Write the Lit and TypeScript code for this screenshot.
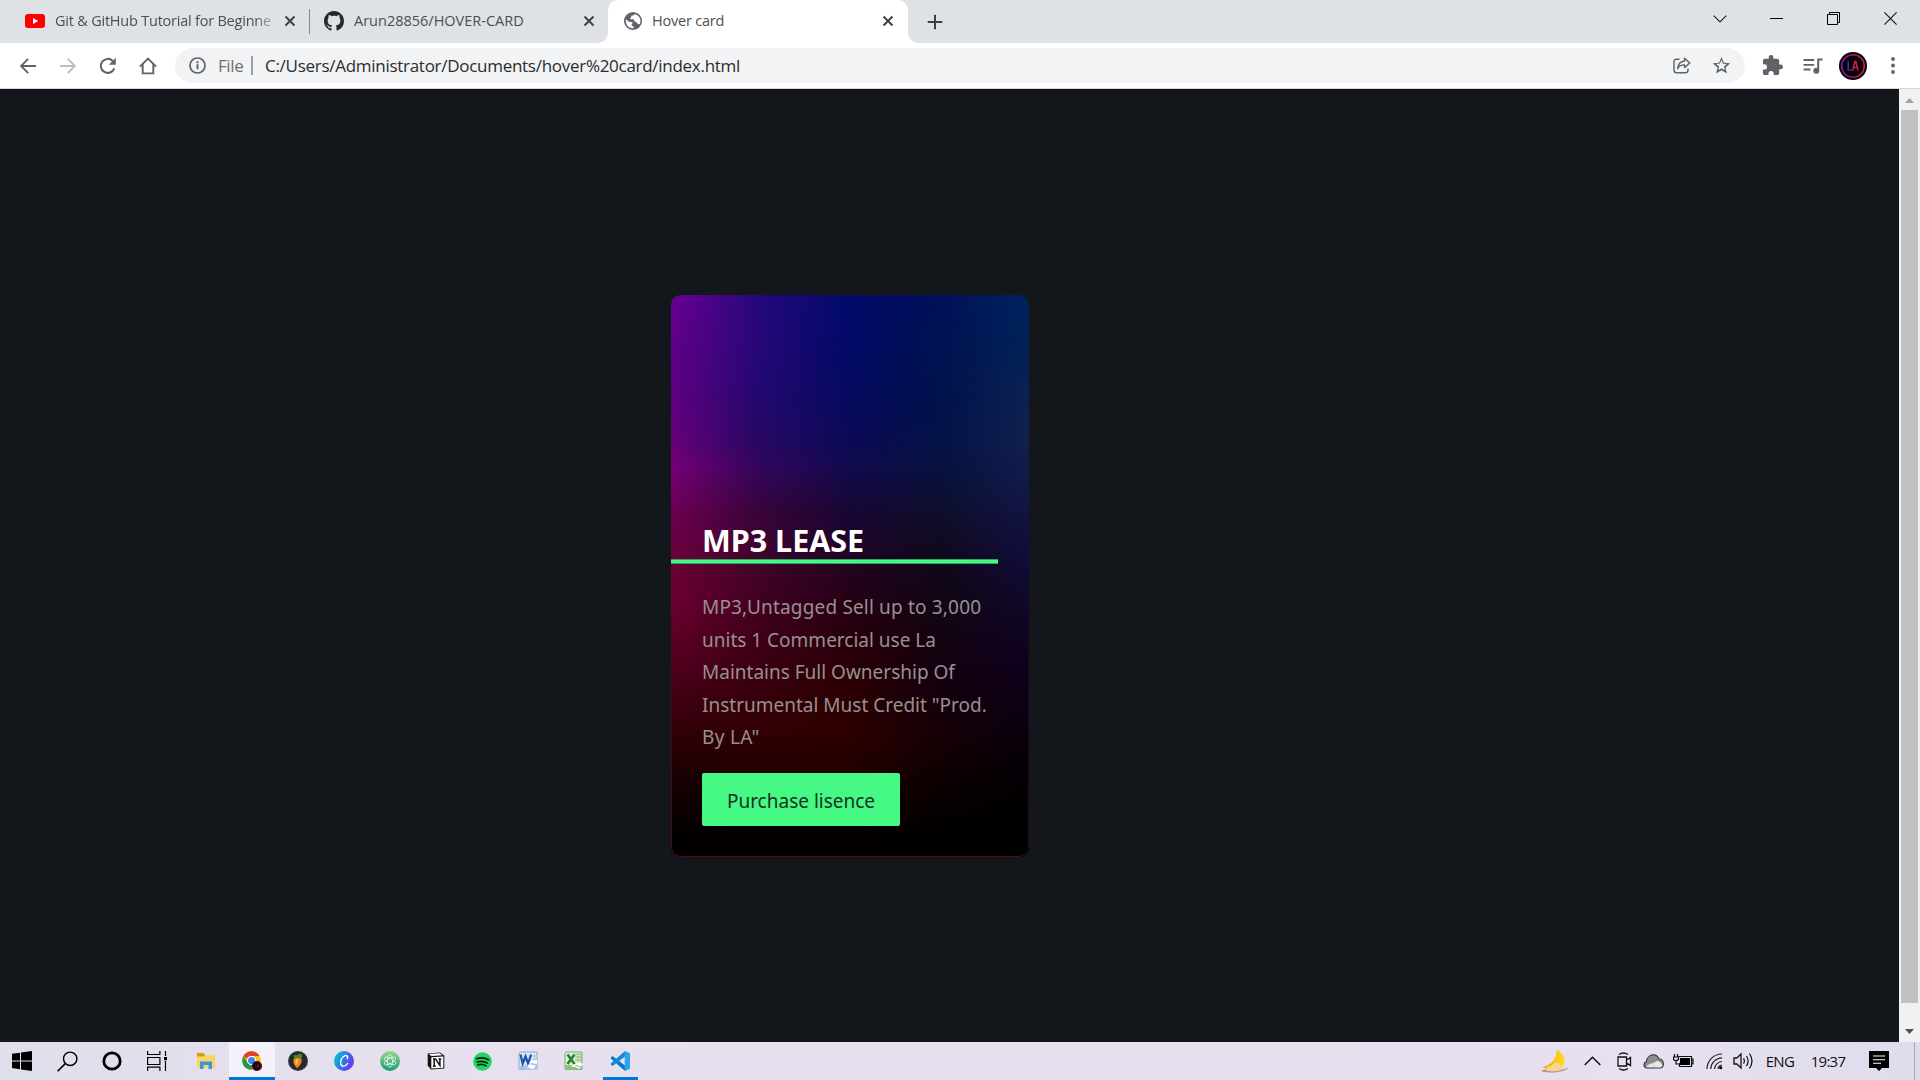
import { LitElement, html, svg, css } from "lit";
import { customElement } from "lit/decorators.js";

const ink = "#5f6368";
const icon = (w: number, h: number, vb: string, body: unknown) =>
  html`<svg width=${w} height=${h} viewBox=${vb} fill="none">${body}</svg>`;

const closeX = icon(12, 12, "0 0 12 12", svg`<path d="M1.5 1.5l9 9M10.5 1.5l-9 9" stroke="#3c4043" stroke-width="1.9"/>`);

const tabIcons = {
  youtube: icon(20, 14, "0 0 20 14", svg`<rect width="20" height="14" rx="3" fill="#f00"/><path d="M8 4l5.2 3L8 10z" fill="#fff"/>`),
  github: icon(20, 20, "0 0 16 16", svg`<path fill="#24292f" d="M8 0C3.58 0 0 3.58 0 8c0 3.54 2.29 6.53 5.47 7.59.4.07.55-.17.55-.38 0-.19-.01-.82-.01-1.49-2.01.37-2.53-.49-2.69-.94-.09-.23-.48-.94-.82-1.13-.28-.15-.68-.52-.01-.53.63-.01 1.08.58 1.23.82.72 1.21 1.87.87 2.33.66.07-.52.28-.87.51-1.07-1.78-.2-3.64-.89-3.64-3.95 0-.87.31-1.59.82-2.15-.08-.2-.36-1.02.08-2.12 0 0 .67-.21 2.2.82.64-.18 1.32-.27 2-.27s1.36.09 2 .27c1.53-1.04 2.2-.82 2.2-.82.44 1.1.16 1.92.08 2.12.51.56.82 1.27.82 2.15 0 3.07-1.87 3.75-3.65 3.95.29.25.54.73.54 1.48 0 1.07-.01 1.93-.01 2.2 0 .21.15.46.55.38A8 8 0 0016 8c0-4.42-3.58-8-8-8z"/>`),
  globe: icon(18, 18, "0 0 18 18", svg`<circle cx="9" cy="9" r="9" fill=${ink}/><path fill="#fff" d="M10.6 1.9c-.3 1-1.100 1.500-2.300 1.500-1 .1-1.100.7-1 1.500-.2.9-1.500.8-1.400 1.700.1.900 1.300.7 2.400.7 1.500 0 2 .5 2 1.800.2 1.200 1.700.7 2.500 1.500.7.500.5 1.500 1.600 1.700.8.100 1.400-.4 1.700-1.100a7.300 7.300 0 0 0-5.500-9.300zM2 7.200c-.8 3.500 1 7 3.700 8.300 1.400.7 2.900.9 3.900.7v-1.700c-1.200-.2-2-.8-2-2 .1-.8 1-.9 1-1.600-.1-.9-1-1-2.300-1C4.600 9.700 3.300 8.500 2 7.200z"/>`),
};

const logo = (size: number, cls: string) => html`<svg class=${cls} width=${size} height=${size} viewBox="0 0 28 28">
  <defs><linearGradient id="ring" x1="0" x2="1"><stop offset="0" stop-color="#7d1fa0"/><stop offset=".5" stop-color="#a01468"/><stop offset="1" stop-color="#e01b2c"/></linearGradient></defs>
  <circle cx="14" cy="14" r="14" fill="#050308"/>
  <circle cx="14" cy="14" r="11.300" fill="none" stroke="url(#ring)" stroke-width="1.500"/>
  <path d="M9.200 9v9h4.300" fill="none" stroke="#4527a8" stroke-width="1.600"/>
  <path d="M13.600 18.500L16.100 9.200h.7l2.300 9.300M14.500 15.600h4" fill="none" stroke="#d81b48" stroke-width="1.500"/>
</svg>`;

/* Artwork colours of the card, one row per height (in %), five evenly spaced stops. */
const mesh: [number, string[]][] = [
  [0, ["#690092", "#24087c", "#000b68", "#001058", "#00245c"]],
  [8, ["#60008a", "#260878", "#000a67", "#001252", "#00225a"]],
  [17, ["#5f0080", "#220870", "#050a60", "#00124c", "#0b2252"]],
  [26, ["#66007a", "#260864", "#0c0a57", "#041246", "#12204f"]],
  [31, ["#740074", "#32065a", "#120a4c", "#07123e", "#121c4c"]],
  [39, ["#6c0050", "#380438", "#180634", "#0f0e2a", "#121444"]],
  [48, ["#6c0036", "#40042a", "#220420", "#10081a", "#110b38"]],
  [56, ["#68002e", "#420020", "#260012", "#120612", "#100828"]],
  [67, ["#4e001c", "#3a0010", "#2a0006", "#140010", "#0e001c"]],
  [78, ["#300008", "#320004", "#2e0000", "#160006", "#0a000e"]],
  [87, ["#160003", "#1c0000", "#1c0000", "#0c0002", "#030004"]],
  [95, ["#050000", "#070000", "#070000", "#020000", "#000000"]],
  [100, ["#000000", "#000000", "#000000", "#000000", "#000000"]],
];

@customElement("browser-chrome")
class BrowserChrome extends LitElement {
  static styles = css`
    :host { display: block; font-family: "Segoe UI", "Open Sans", "Noto Sans", sans-serif; }
    svg { display: block; flex: none; }
    .strip { height: 43px; background: #dee1e6; display: flex; align-items: stretch; }
    .tab { display: flex; align-items: center; font-size: 14.500px; color: #4b4f53; height: 42px; white-space: nowrap; box-sizing: border-box; }
    .tab .label { flex: 1; margin-left: 10px; padding-bottom: 2px; }
    .t1 { width: 309px; padding: 0 13px 0 25px; }
    .t1 .label { letter-spacing: -0.220px; margin-right: 5px; -webkit-mask-image: linear-gradient(90deg, #000 200px, transparent 225px); mask-image: linear-gradient(90deg, #000 200px, transparent 225px); }
    .t2 { width: 299px; padding: 0 14px 0 14px; }
    .t2 .label { letter-spacing: 0; }
    .sep { width: 1px; height: 25px; margin-top: 9px; background: #878b90; }
    .active { width: 300px; height: 43px; background: #fff; border-radius: 10px 10px 0 0; padding: 0 14px 1px 16px; margin-left: -1px; margin-right: -1px; position: relative; }
    .active .label { letter-spacing: -0.220px; margin-left: 10px; }
    .active::before, .active::after { content: ""; position: absolute; bottom: 0; width: 10px; height: 10px; }
    .active::before { left: -10px; background: radial-gradient(circle at 0 0, transparent 9.500px, #fff 10px); }
    .active::after { right: -10px; background: radial-gradient(circle at 100% 0, transparent 9.500px, #fff 10px); }
    .plus { width: 56px; display: grid; place-items: center; }
    .controls { margin-left: auto; display: flex; margin-right: 1px; height: 37px; }
    .controls > span { width: 57px; display: grid; place-items: center; }
    .bar { height: 45px; background: #fff; border-bottom: 1px solid #d3d5d8; display: flex; align-items: center; padding: 0 7px 0 7.500px; }
    .btn { width: 40px; display: grid; place-items: center; }
    .omni { flex: none; width: 1570px; height: 35px; border-radius: 18px; background: #f1f3f4; margin: 0 7.500px 0 7.500px; display: flex; align-items: center; box-sizing: border-box; padding: 0 14px; font-size: 17px; color: #2b2c2f; white-space: nowrap; }
    .file { color: #6b6f74; margin-left: 12px; width: 33px; letter-spacing: -0.400px; }
    .rule { width: 2px; height: 19px; background: #9a9da1; margin-right: 12px; }
    .url { flex: 1; letter-spacing: -0.280px; }
    .share { margin-right: 21px; }
  `;
  render() {
    return html`
      <div class="strip">
        <div class="tab t1">${tabIcons.youtube}<span class="label">Git &amp; GitHub Tutorial for Beginne</span>${closeX}</div>
        <div class="sep"></div>
        <div class="tab t2">${tabIcons.github}<span class="label">Arun28856/HOVER-CARD</span>${closeX}</div>
        <div class="tab active">${tabIcons.globe}<span class="label">Hover card</span>${closeX}</div>
        <div class="plus">${icon(16, 16, "0 0 16 16", svg`<path d="M8 .7v14.600M.7 8h14.600" stroke="#3c4043" stroke-width="2"/>`)}</div>
        <div class="controls">
          <span>${icon(14, 8, "0 0 14 8", svg`<path d="M.7.7L7 7l6.300-6.300" stroke="#222" stroke-width="1.100"/>`)}</span>
          <span>${icon(13, 1, "0 0 13 1", svg`<path d="M0 .5h13" stroke="#000"/>`)}</span>
          <span>${icon(13, 13, "0 0 13 13", svg`<path d="M.5 2.500h10v10H.5zM2.500 2.500v-2h10v10h-2" stroke="#000"/>`)}</span>
          <span>${icon(13, 13, "0 0 13 13", svg`<path d="M.4.4l12.200 12.200M12.600.4L.4 12.600" stroke="#111" stroke-width="1.100"/>`)}</span>
        </div>
      </div>
      <div class="bar">
        <span class="btn">${icon(16, 16, "0 0 16 16", svg`<path d="M8.200.8L1 8l7.200 7.200M1 8h15" stroke=${ink} stroke-width="1.900"/>`)}</span>
        <span class="btn">${icon(16, 16, "0 0 16 16", svg`<path d="M7.800.8L15 8l-7.200 7.200M15 8H0" stroke="#babcbe" stroke-width="1.900"/>`)}</span>
        <span class="btn">${icon(18, 18, "0 0 18 18", svg`<path d="M15.300 11.400A7 7 0 1 1 13.800 4" stroke=${ink} stroke-width="2"/><path d="M16.800.8v7h-7z" fill=${ink}/>`)}</span>
        <span class="btn">${icon(18, 18, "0 0 18 18", svg`<path d="M.9 9.600L9 1.600l8.100 8M3.700 7.500v8.900h10.600V7.500" stroke=${ink} stroke-width="1.900"/>`)}</span>
        <div class="omni">
          ${icon(17, 17, "0 0 17 17", svg`<circle cx="8.500" cy="8.500" r="7.500" stroke=${ink} stroke-width="1.700"/><path d="M8.500 7.300v5M8.500 4.300v1.900" stroke=${ink} stroke-width="2"/>`)}
          <span class="file">File</span><span class="rule"></span>
          <span class="url">C:/Users/Administrator/Documents/hover%20card/index.html</span>
          <span class="share">${icon(18, 17, "0 0 18 17", svg`<path d="M6.500 2.200H3.500Q1 2.200 1 4.700v8.600Q1 15.800 3.500 15.800h9Q15 15.800 15 13.300V11.500" stroke=${ink} stroke-width="1.400"/><path d="M11.500 1.200L16.800 6l-5.300 4.600V7.900C8.200 7.700 6 9.100 4.600 11.600 5 7.300 7.300 4.500 11.500 4z" stroke=${ink} stroke-width="1.400" stroke-linejoin="round"/>`)}</span>
          ${icon(19, 19, "0 0 24 24", svg`<path d="M23 9.240l-7.900-.68L12 1.300 8.900 8.570 1 9.240l6 5.200-1.800 7.720 6.800-4.100 6.800 4.100-1.790-7.730L23 9.240zM12 15.400l-4.120 2.490 1.090-4.690-3.630-3.150 4.790-.42L12 5.200l1.880 4.440 4.790.41-3.630 3.150 1.090 4.690L12 15.400z" fill=${ink}/>`)}
        </div>
        <span class="btn">${icon(21, 21, "1 1 22 22", svg`<path d="M20.500 11H19V7c0-1.100-.9-2-2-2h-4V3.500a2.500 2.500 0 0 0-5 0V5H4c-1.100 0-2 .9-2 2v3.800h1.500a2.700 2.700 0 0 1 0 5.400H2V20c0 1.100.9 2 2 2h3.800v-1.500a2.700 2.700 0 0 1 5.400 0V22H17c1.100 0 2-.9 2-2v-4h1.500a2.500 2.500 0 0 0 0-5z" fill=${ink}/>`)}</span>
        <span class="btn">${icon(20, 16, "0 0 20 16", svg`<path d="M.5 2h10.700M.5 6.800h10.700M.5 11.500h7" stroke=${ink} stroke-width="1.800"/><path d="M15.200 12.500V1.600H19.500" stroke=${ink} stroke-width="2"/><circle cx="13.300" cy="12.700" r="3" fill=${ink}/>`)}</span>
        <span class="btn">${logo(28, "")}</span>
        <span class="btn">${icon(4, 17, "0 0 4 17", svg`<g fill=${ink}><circle cx="2" cy="2" r="1.900"/><circle cx="2" cy="8.500" r="1.900"/><circle cx="2" cy="15" r="1.900"/></g>`)}</span>
      </div>`;
  }
}

@customElement("hover-card")
class HoverCard extends LitElement {
  static styles = css`
    :host { display: block; width: 358px; height: 562px; font-family: "Segoe UI", "Noto Sans", sans-serif; }
    .card { display: grid; width: 358px; height: 562px; border-radius: 10px; overflow: hidden; }
    .row, .content, .rim { grid-area: 1 / 1; }
    .rim { border: 1px solid #520a1a; border-top: 0; border-right-color: #220a20; border-radius: 10px; -webkit-mask-image: linear-gradient(180deg, transparent 50%, #000 90%); mask-image: linear-gradient(180deg, transparent 50%, #000 90%); }
    .content { z-index: 1; display: flex; flex-direction: column; align-items: flex-start; }
    h1 { margin: 224px 0 0 31px; font-size: 30.500px; line-height: 42px; height: 40px; font-weight: 700; color: #fff; letter-spacing: 0; white-space: nowrap; }
    .line { width: 327px; height: 5px; background: #46f884; border: 1px solid #31a35f; border-left: 0; border-right: 0; box-sizing: border-box; }
    p { margin: 27px 0 0 31px; font-size: 19px; line-height: 32.600px; color: #989090; white-space: nowrap; letter-spacing: 0; }
    .wide { letter-spacing: 0.170px; }
    .wider { letter-spacing: 0.350px; }
    button { margin: 19px 0 0 31px; width: 198px; height: 53px; border: 0; border-radius: 2px; background: #46f884; color: #153322; font: 400 19px/53px "Segoe UI", "Noto Sans", sans-serif; padding: 2px 0 0; white-space: nowrap; }
  `;
  render() {
    return html`<div class="card">
      ${mesh.map(([y, stops], i) => {
        const mask = i ? `linear-gradient(180deg, transparent ${mesh[i - 1][0]}%, #000 ${y}%)` : "none";
        return html`<div class="row" style="background:linear-gradient(90deg, ${stops.join(",")});-webkit-mask-image:${mask};mask-image:${mask}"></div>`;
      })}
      <div class="rim"></div>
      <div class="content">
        <h1>MP3 LEASE</h1>
        <div class="line"></div>
        <p><span class="wide">MP3,Untagged Sell up to 3,000</span><br />units 1 Commercial use La<br />Maintains Full Ownership Of<br />Instrumental Must Credit "Prod.<br /><span class="wider">By LA"</span></p>
        <button>Purchase lisence</button>
      </div>
    </div>`;
  }
}

@customElement("task-bar")
class TaskBar extends LitElement {
  static styles = css`
    :host { display: flex; height: 38px; background: linear-gradient(90deg, #e0dfec 0, #e7e0ef 25%, #e6dfee 60%, #e7e0f0 85%, #dfdcec 100%); font-family: "Segoe UI", "Open Sans", "Noto Sans", sans-serif; color: #111; font-size: 15px; }
    svg { display: block; }
    .cell { flex: none; width: 46px; display: grid; place-items: center; box-sizing: border-box; }
    .sys { width: 45px; padding-right: 1px; }
    .gap { width: 3px; }
    .on { background: #f4f2f8; border-bottom: 3px solid #0078d7; padding-top: 3px; }
    .on2 { background: linear-gradient(#0078d7, #0078d7) center bottom / 35px 3px no-repeat; }
    .tray { margin-left: auto; display: flex; white-space: nowrap; }
    .stack { display: grid; }
    .stack > * { grid-area: 1 / 1; }
    .badge { align-self: end; justify-self: end; }
    .eng { letter-spacing: -0.600px; }
    .time { letter-spacing: -0.700px; }
    .edge { width: 1px; background: #aaa8b8; }
  `;
  render() {
    const cell = (w: number, body: unknown, cls = "") => html`<span class="cell ${cls}" style="width:${w}px">${body}</span>`;
    return html`
      <span class="cell sys">${icon(20, 20, "0 0 20 20", svg`<path fill="#000" d="M0 2.800l8-1.100v7.700H0zM9 1.500L20 0v9.400H9zM0 10.500h8v7.700l-8-1.100zM9 10.500h11V20L9 18.500z"/>`)}</span>
      <span class="cell sys">${icon(21, 21, "0 0 21 21", svg`<circle cx="13.200" cy="7.800" r="6.700" stroke="#000" stroke-width="1.400"/><path d="M8.300 12.600L.6 20.300" stroke="#000" stroke-width="1.600"/>`)}</span>
      <span class="cell sys">${icon(20, 20, "0 0 20 20", svg`<circle cx="10" cy="10" r="8.200" stroke="#000" stroke-width="2.800"/>`)}</span>
      <span class="cell sys">${icon(20, 20, "0 0 20 20", svg`<path d="M.6 0v3.500h12.300V0M.6 20v-3.800h12.300V20M.6 6.500h12.300v7H.6zM18.500 0v5M18.500 10v10" stroke="#000" stroke-width="1.200"/><path fill="#000" d="M17 6h3.200v3.200H17z"/>`)}</span>
      <span class="gap"></span>
      <span class="cell">${icon(18, 16, "0 0 18 16", svg`<path d="M0 0h7l1 2.500V7H0z" fill="#d99a1b"/><path d="M0 3.500h7l1.200-1.200H18V15H0z" fill="#fdd462"/><path d="M3 8.500h12V16h-3.500v-4h-5v4H3z" fill="#3b97d8"/>`)}</span>
      <span class="cell on"><span class="stack">${icon(20, 20, "0 0 20 20", svg`<circle cx="9.500" cy="9.500" r="9.300" fill="#fbc116"/><path d="M1.400 4.900A9.300 9.300 0 0 1 17.600 4.900H9.500a4.600 4.600 0 0 0-4.400 3.200z" fill="#de4132"/><path d="M1.400 4.900A9.300 9.300 0 0 0 9.500 18.800l4-7-4 2.300a4.600 4.600 0 0 1-4-2.300z" fill="#25964b"/><circle cx="9.500" cy="9.500" r="4.500" fill="#fff"/><circle cx="9.500" cy="9.500" r="3.500" fill="#4086f0"/>`)}${logo(10, "badge")}</span></span>
      <span class="cell">${icon(20, 20, "0 0 20 20", svg`<circle cx="10" cy="10" r="10" fill="#34383b"/><circle cx="10" cy="10" r="8.500" fill="#24282a"/><path d="M5.500 8.500C6.500 6 12 5.500 13.500 8c1 3-1.500 7-4.500 9.300C7 15 4.700 12 5.500 8.500z" fill="#fb7d1c"/><path d="M7.500 9c1-1.300 2.300-1.200 2.700-.5C10 11 9 13 8.500 14 7.300 12.500 7 11 7.500 9z" fill="#ffc34d"/><path d="M5.500 6c0-2 2-3 3.500-1.500C10 2.500 13 2 14 4c.7 1.500-.2 3.700-1.500 4L10 6.500 7.500 7.500z" fill="#478c2b"/>`)}</span>
      <span class="cell">${icon(20, 20, "0 0 20 20", svg`<defs><linearGradient id="cv" x1="0" y1=".3" x2="1" y2=".8"><stop offset="0" stop-color="#06c2d0"/><stop offset=".5" stop-color="#3275e5"/><stop offset="1" stop-color="#7d2ae8"/></linearGradient></defs><circle cx="10" cy="10" r="10" fill="url(#cv)"/><path d="M13.300 7.800c1-2-.3-3.700-2.200-3.200-3 .8-5 5-4.400 8 .6 3.300 4.200 3.500 6.800 0" stroke="#fff" stroke-width="1.400" stroke-linecap="round"/>`)}</span>
      <span class="cell">${icon(20, 20, "0 0 20 20", svg`<defs><linearGradient id="at" x1="0" y1="0" x2="0" y2="1"><stop offset="0" stop-color="#9bd58f"/><stop offset="1" stop-color="#12a070"/></linearGradient></defs><circle cx="10" cy="10" r="10" fill="url(#at)"/><g stroke="#e8f8e8" stroke-width=".8"><ellipse cx="10" cy="10" rx="2.600" ry="6.300"/><ellipse cx="10" cy="10" rx="2.600" ry="6.300" transform="rotate(60 10 10)"/><ellipse cx="10" cy="10" rx="2.600" ry="6.300" transform="rotate(120 10 10)"/></g>`)}</span>
      <span class="cell">${icon(18, 18, "0 0 18 18", svg`<path d="M.7 1.500L13 .6l4.300 3v12.900L4 17.400.7 13.500z" fill="#111"/><path d="M1.800 1.900L12.500 1.300l3 2L4.500 4z" fill="#fff"/><path d="M4.300 5.200l12-.7v11.300l-12 .7z" fill="#fff"/><path d="M6 7h2.600l4.300 6.300V7.300M7.200 7v7.300M6 14.300h2.700M11.600 7h2.700" stroke="#111" stroke-width="1.500"/>`)}</span>
      <span class="cell">${icon(19, 19, "0 0 19 19", svg`<circle cx="9.500" cy="9.500" r="9.300" fill="#1ed760"/><path d="M3.500 6.700c4-1.300 8.800-.8 12 1.100M4.200 9.900c3.500-1 7.200-.6 10.200 1.100M4.900 12.800c3-.7 5.900-.4 8.300 1.100" stroke="#0b2113" stroke-width="1.700" stroke-linecap="round"/>`)}</span>
      <span class="cell">${icon(20, 20, "0 0 20 20", svg`<path d="M2 1h17v17.500H1V3z" fill="#dbe8f6" stroke="#7f9fc4" stroke-width=".8"/><path d="M8 11l11-2v9.500H8z" fill="#fff"/><path d="M2 15l6-1 6-2 5 1v5.500H1z" fill="#a9c5e6"/><path d="M2.500 3.500l2.200 9L7.500 5.500l2.600 7 3-9" stroke="#1d58b0" stroke-width="2.300"/><path d="M15 5h3M15 8h3" stroke="#8ba8cc"/><path d="M11 13l7 2-3 3-6-2z" fill="#fff"/>`)}</span>
      <span class="cell">${icon(20, 20, "0 0 20 20", svg`<path d="M2 1h16v17.500H1V3z" fill="#e0f0d9" stroke="#6c9c68" stroke-width=".8"/><path d="M1 14h17v4.500H1z" fill="#8fc37d"/><path d="M11 3h6v10h-6M14 3v10M11 6h6M11 9h6" stroke="#78b36d" stroke-width=".8"/><path d="M3.500 3.500l7 9.500M10.500 3.500l-7 9.500" stroke="#258439" stroke-width="2.600"/><path d="M7 15l8-4 4 2-4 5z" fill="#fff"/><path d="M11 14l5 2M10 16l4 2" stroke="#85b77b"/>`)}</span>
      <span class="cell on2">${icon(20, 20, "0 0 20 20", svg`<path d="M1 6.200l1.600-1.300L15 14.400V20L.8 7.600z" fill="#0879c8"/><path d="M1 13.800l1.600 1.300L15 5.600V0L.8 12.400z" fill="#1388d6"/><path d="M14.700 0L20 2.300v15.400L14.700 20z" fill="#2aa4f2"/>`)}</span>
      <div class="tray">
        ${cell(38, icon(28, 25, "0 0 28 25", svg`<defs><linearGradient id="mo" x1="0" x2="1"><stop offset="0" stop-color="#ff9e00"/><stop offset=".6" stop-color="#ffc800"/><stop offset="1" stop-color="#ffd92e"/></linearGradient></defs><path d="M15.500.5c7.500 4 10.500 11 6 16.500-4 4.500-12 5.500-20 1C10.500 16 16.500 9 15.500.5z" fill="url(#mo)"/><path d="M0 22c4-1.800 8-1.500 12-1h8l8-2.500c-1.500 2-6 3.500-11 4.500-6 1-13 .5-17-1z" fill="#b98f80"/><path d="M5 21c0-3 3-4.500 5.500-4 2-4.500 8-4.500 9.500-.5 3 .2 4 2 2.500 3.500C19 22.500 8 23.500 5 21z" fill="#f3d59a"/>`))}
        ${cell(37, icon(17, 10, "0 0 17 10", svg`<path d="M.7 9L8.500 1.200 16.300 9" stroke="#111" stroke-width="1.500"/>`))}
        ${cell(27, icon(15, 19, "0 0 15 19", svg`<path d="M1 5h8.500v9H1zM9.500 8l4-2.500v8l-4-2.500" stroke="#111" stroke-width="1.300"/><path d="M2 2.500q4.500-3 9 0M2 16.500q4.500 3 9 0" stroke="#111" stroke-width="1.300"/>`))}
        ${cell(30, icon(21, 15, "0 0 21 15", svg`<path d="M4.500 14C.5 14-.3 9 3.300 7.700 4 3.500 7 .8 10.200.8c3 0 4.800 1.800 5.700 4C21.500 5.300 21.500 13 17.500 14z" fill="#8c8c8c" stroke="#333" stroke-width="1.100"/><path d="M3 13.300C4 11 7 9.800 9.500 9.300L14 7c2 0 5 2 5.500 4.500-.5 1.300-1 1.800-2 2z" fill="#e5e5e5"/>`))}
        ${cell(30, icon(21, 14, "0 0 21 14", svg`<path d="M5.500 2.500h13v10h-12V9M18.500 5h1.500v5h-1.500" stroke="#111" stroke-width="1.200"/><path d="M7 4h10v7H7z" fill="#000"/><path d="M1.500 0v3M4.500 0v3M.5 3h5v2.500Q3 8 .5 5.500zM3 6.500v3.500h4" stroke="#111" stroke-width="1.200"/>`))}
        ${cell(32, icon(17, 17, "0 0 17 17", svg`<path d="M1 16A15 15 0 0 1 16 1M4.800 16A11.500 11.500 0 0 1 16 4.800M8.500 16A8 8 0 0 1 16 8.500M12 16a4.500 4.500 0 0 1 4-4" stroke="#222" stroke-width="1.200"/><circle cx="14.700" cy="14.700" r="1.600" fill="#000"/>`))}
        ${cell(26, icon(21, 18, "0 0 21 18", svg`<path d="M1 6h2.800L8 2v14l-4.200-4H1z" stroke="#111" stroke-width="1.300"/><path d="M10.500 6.300q1.800 2.700 0 5.400M13.500 4q3.200 5 0 10M16.500 1.500q5 7.500 0 15" stroke="#111" stroke-width="1.200"/>`))}
        ${cell(48, html`<span class="eng">ENG</span>`)}
        ${cell(48, html`<span class="time">19:37</span>`)}
        ${cell(54, icon(20, 20, "0 0 20 20", svg`<path d="M0 0h20v17h-7l-3 3-3-3H0z" fill="#000"/><path d="M4 5h12M4 8.700h12M4 12.300h8" stroke="#fff" stroke-width="1.100"/>`))}
        ${cell(8, "")}
        <span class="edge"></span>
        ${cell(5, "")}
      </div>`;
  }
}

@customElement("app-root")
class AppRoot extends LitElement {
  static styles = css`
    :host { display: flex; flex-direction: column; width: 1920px; height: 1080px; overflow: hidden; background: #13171b; }
    .page { flex: 1; display: flex; background: #13171b; min-height: 0; }
    .view { flex: 1; padding: 206px 0 0 671px; }
    .scroll { width: 21px; background: #f1f1f1; display: flex; flex-direction: column; align-items: center; justify-content: space-between; box-sizing: border-box; padding: 9px 0 8px; }
    .scroll svg { display: block; flex: none; }
    .thumb { width: 17px; height: 893px; background: #c1c1c1; margin: 7px 0 auto; }
  `;
  render() {
    return html`
      <browser-chrome></browser-chrome>
      <main class="page">
        <div class="view"><hover-card></hover-card></div>
        <div class="scroll">
          ${icon(9, 5, "0 0 9 5", svg`<path d="M0 5L4.500 0 9 5z" fill="#a3a3a3"/>`)}
          <div class="thumb"></div>
          ${icon(9, 5, "0 0 9 5", svg`<path d="M0 0h9L4.500 5z" fill="#505050"/>`)}
        </div>
      </main>
      <task-bar></task-bar>`;
  }
}
